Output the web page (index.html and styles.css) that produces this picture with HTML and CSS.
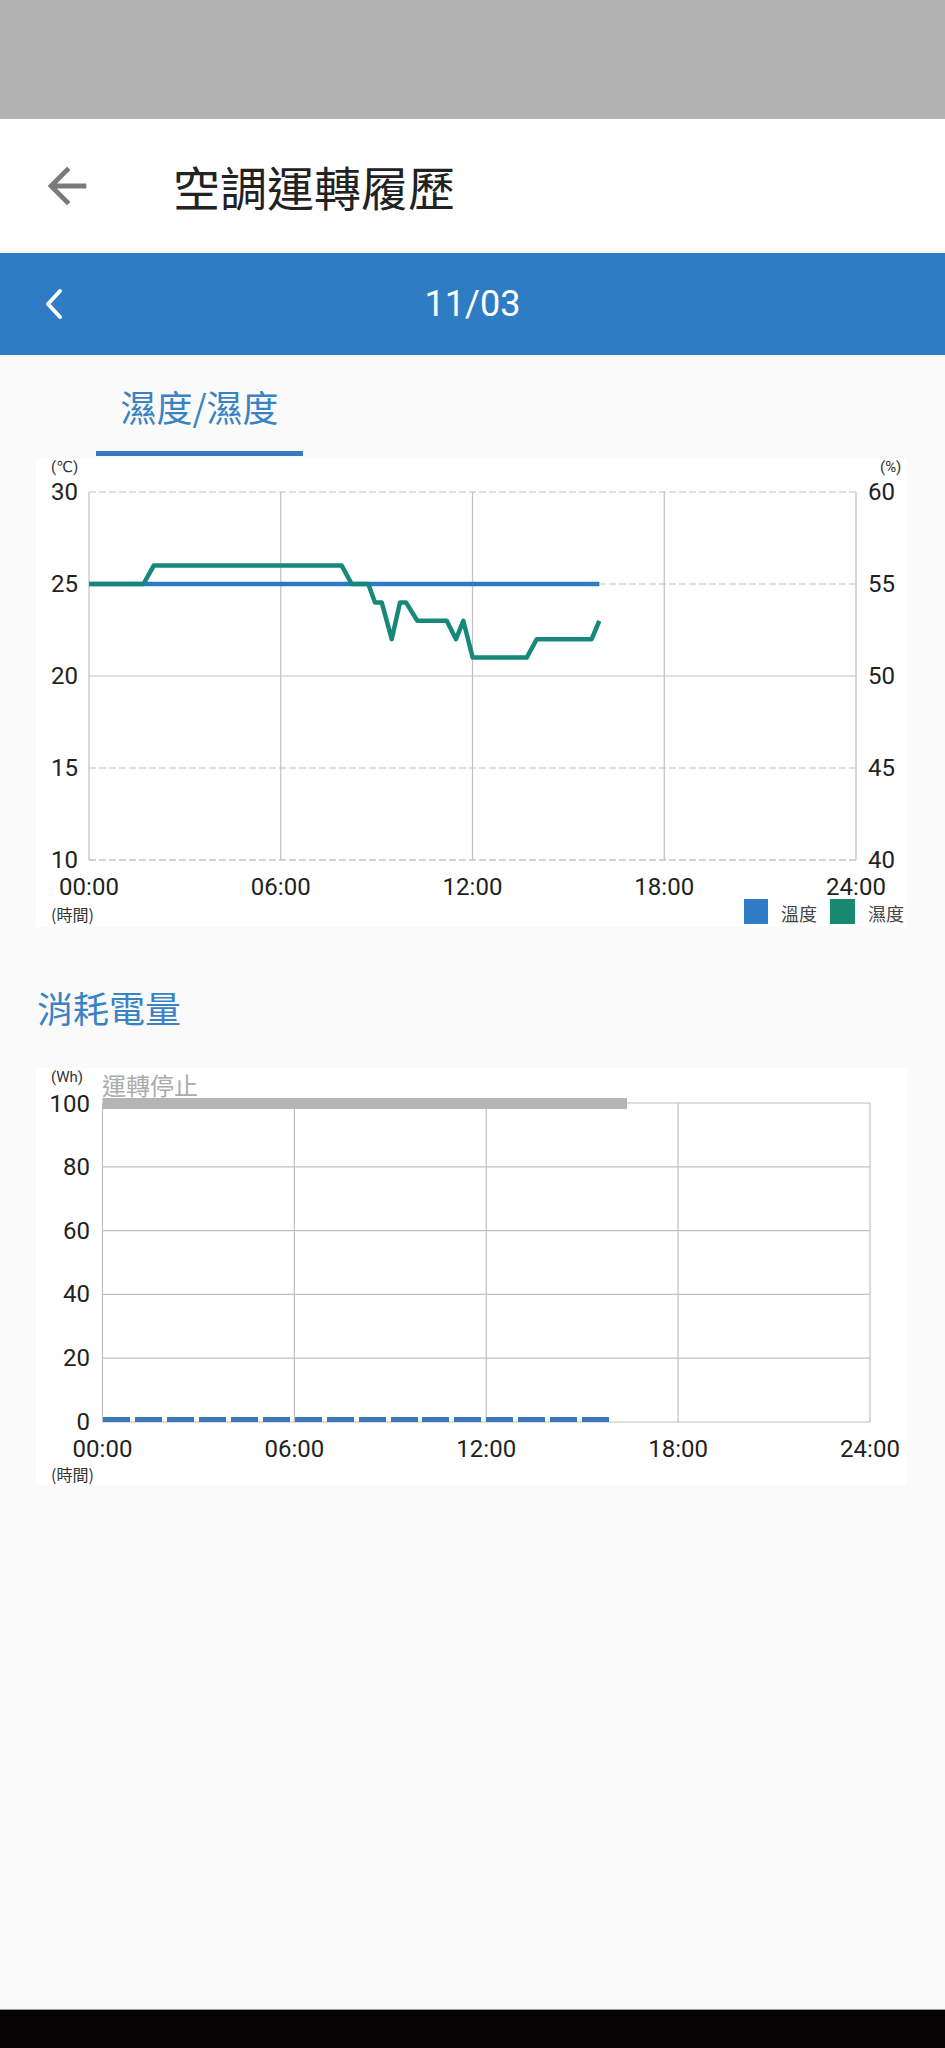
FILE: index.html
```html
<!DOCTYPE html>
<html lang="zh-Hant">

<head>
    <meta charset="UTF-8">
    <meta name="viewport" content="width=device-width, initial-scale=1.0">
    <link rel="stylesheet" href="styles.css">
    <title>空調運轉履歷</title>
</head>

<body>
    <div class="status-bar"></div>

    <header class="app-bar">
        <button class="back-button" aria-label="back">
            <svg viewBox="0 0 24 24" width="58" height="58">
                <path d="M20 11H7.83l5.59-5.59L12 4l-8 8 8 8 1.41-1.41L7.83 13H20v-2z" />
            </svg>
        </button>
        <h1>空調運轉履歷</h1>
    </header>

    <nav class="date-bar">
        <button class="prev-day" aria-label="previous day">
            <svg viewBox="0 0 24 32" width="24" height="32">
                <polyline points="18,3 6,16 18,29" />
            </svg>
        </button>
        <span class="date">11/03</span>
        <span></span>
    </nav>

    <main>
        <div class="tabs">
            <div class="tab active">濕度/濕度</div>
        </div>

        <!-- temperature / humidity -->
        <section class="chart-card chart-climate">
            <svg width="871" height="469" viewBox="0 0 871 469">
                <g class="grid">
                    <line class="dashed" x1="53" y1="34" x2="820" y2="34" />
                    <line class="dashed" x1="53" y1="126" x2="820" y2="126" />
                    <line x1="53" y1="218" x2="820" y2="218" />
                    <line class="dashed" x1="53" y1="310" x2="820" y2="310" />
                    <line class="dashed dark" x1="53" y1="402" x2="820" y2="402" />
                    <line x1="53" y1="34" x2="53" y2="402" />
                    <line x1="244.75" y1="34" x2="244.75" y2="402" />
                    <line x1="436.5" y1="34" x2="436.5" y2="402" />
                    <line x1="628.25" y1="34" x2="628.25" y2="402" />
                    <line x1="820" y1="34" x2="820" y2="402" />
                </g>

                <polyline class="series temp" points="53,126 563.3,126" />
                <polyline class="series humid" points="53,126 107.5,126 117.7,107.6 305.7,107.6 315.7,126 332.3,126 339,144.4 345.7,144.4 355.7,181.2 364,144.4 370,144.4 381.3,162.8 410.7,162.8 420,181.2 427.3,162.8 436.7,199.6 490.7,199.6 500.7,181.2 555.7,181.2 563.3,162.8" />

                <text class="unit" x="15" y="9">(℃)</text>
                <text class="unit" x="844" y="9">(%)</text>

                <g class="axis" text-anchor="end">
                    <text x="42" y="34">30</text>
                    <text x="42" y="126">25</text>
                    <text x="42" y="218">20</text>
                    <text x="42" y="310">15</text>
                    <text x="42" y="402">10</text>
                </g>
                <g class="axis">
                    <text x="832" y="34">60</text>
                    <text x="832" y="126">55</text>
                    <text x="832" y="218">50</text>
                    <text x="832" y="310">45</text>
                    <text x="832" y="402">40</text>
                </g>
                <g class="axis" text-anchor="middle">
                    <text x="53" y="429">00:00</text>
                    <text x="244.75" y="429">06:00</text>
                    <text x="436.5" y="429">12:00</text>
                    <text x="628.25" y="429">18:00</text>
                    <text x="820" y="429">24:00</text>
                </g>
                <text class="unit cjk" x="15" y="456">(時間)</text>

                <rect class="swatch temp" x="708" y="441" width="24" height="25" />
                <text class="legend" x="745" y="455">溫度</text>
                <rect class="swatch humid" x="794" y="441" width="25" height="25" />
                <text class="legend" x="832" y="455">濕度</text>
            </svg>
        </section>

        <h2 class="section-title">消耗電量</h2>

        <!-- power consumption -->
        <section class="chart-card chart-power">
            <svg width="871" height="417" viewBox="0 0 871 417">
                <g class="grid">
                    <line x1="66.5" y1="35" x2="834" y2="35" />
                    <line x1="66.5" y1="98.8" x2="834" y2="98.8" />
                    <line x1="66.5" y1="162.6" x2="834" y2="162.6" />
                    <line x1="66.5" y1="226.4" x2="834" y2="226.4" />
                    <line x1="66.5" y1="290.2" x2="834" y2="290.2" />
                    <line x1="66.5" y1="354" x2="834" y2="354" />
                    <line x1="66.5" y1="35" x2="66.5" y2="354" />
                    <line x1="258.4" y1="35" x2="258.4" y2="354" />
                    <line x1="450.25" y1="35" x2="450.25" y2="354" />
                    <line x1="642.1" y1="35" x2="642.1" y2="354" />
                    <line x1="834" y1="35" x2="834" y2="354" />
                </g>

                <rect class="stop-bar" x="66.5" y="30" width="524.5" height="11" />
                <text class="unit" x="15" y="9">(Wh)</text>
                <text class="stopped" x="66" y="16">運轉停止</text>

                <g class="bars">
                    <rect x="67" y="349" width="27" height="5" />
                    <rect x="99" y="349" width="27" height="5" />
                    <rect x="131" y="349" width="27" height="5" />
                    <rect x="163" y="349" width="27" height="5" />
                    <rect x="195" y="349" width="27" height="5" />
                    <rect x="227" y="349" width="27" height="5" />
                    <rect x="259" y="349" width="27" height="5" />
                    <rect x="291" y="349" width="27" height="5" />
                    <rect x="323" y="349" width="27" height="5" />
                    <rect x="355" y="349" width="27" height="5" />
                    <rect x="386" y="349" width="27" height="5" />
                    <rect x="418" y="349" width="27" height="5" />
                    <rect x="450" y="349" width="27" height="5" />
                    <rect x="482" y="349" width="27" height="5" />
                    <rect x="514" y="349" width="27" height="5" />
                    <rect x="546" y="349" width="27" height="5" />
                </g>

                <g class="axis" text-anchor="end">
                    <text x="54" y="36">100</text>
                    <text x="54" y="98.8">80</text>
                    <text x="54" y="162.6">60</text>
                    <text x="54" y="226.4">40</text>
                    <text x="54" y="290.2">20</text>
                    <text x="54" y="354">0</text>
                </g>
                <g class="axis" text-anchor="middle">
                    <text x="66.5" y="381">00:00</text>
                    <text x="258.4" y="381">06:00</text>
                    <text x="450.25" y="381">12:00</text>
                    <text x="642.1" y="381">18:00</text>
                    <text x="834" y="381">24:00</text>
                </g>
                <text class="unit cjk" x="15" y="406">(時間)</text>
            </svg>
        </section>
    </main>

    <div class="nav-bar"></div>
</body>

</html>
```

FILE: styles.css
```css
* {
    box-sizing: border-box;
}

body {
    margin: 0;
    min-height: 2048px;
    display: flex;
    flex-direction: column;
    background-color: #fafafa;
    font-family: Roboto, "Noto Sans CJK TC", sans-serif;
    color: #212121;
}

.status-bar {
    height: 119px;
    background-color: #b3b3b3;
}

.app-bar {
    height: 129px;
    display: flex;
    align-items: center;
    padding: 4px 0 0 38px;
    background-color: #fff;
}

.back-button {
    width: 58px;
    height: 58px;
    padding: 0;
    border: 0;
    background: none;
    fill: #7a7a7a;
}

.back-button svg {
    display: block;
}

.app-bar h1 {
    margin: 0 0 0 77px;
    font-family: "Noto Sans CJK TC", sans-serif;
    font-size: 47px;
    font-weight: 400;
    line-height: 56px;
    color: #222;
}

.date-bar {
    height: 102px;
    margin-top: 5px;
    display: grid;
    grid-template-columns: 1fr auto 1fr;
    align-items: center;
    background-color: #2e7cc4;
    color: #fff;
}

.prev-day {
    justify-self: start;
    margin-left: 42px;
    padding: 0;
    border: 0;
    background: none;
}

.prev-day svg {
    display: block;
    fill: none;
    stroke: #fff;
    stroke-width: 4;
    stroke-linecap: round;
    stroke-linejoin: round;
}

.date {
    font-size: 36px;
    line-height: 1;
}

.tabs {
    display: flex;
    padding-left: 96px;
    margin-bottom: 2px;
}

.tab {
    width: 207px;
    padding: 27px 0 21px;
    border-bottom: 5px solid #3a7bbf;
    text-align: center;
    font-family: "Noto Sans CJK TC", sans-serif;
    font-size: 36px;
    line-height: 48px;
    color: #3a82c4;
}

.chart-card {
    margin: 0 38px 0 36px;
    background-color: #fff;
}

.chart-card svg {
    display: block;
    overflow: visible;
}

.chart-climate {
    height: 469px;
}

.chart-power {
    height: 417px;
}

.section-title {
    margin: 0;
    padding: 56px 0 37px 37px;
    font-family: "Noto Sans CJK TC", sans-serif;
    font-size: 36px;
    font-weight: 400;
    line-height: 48px;
    color: #3a82c4;
}

.grid line {
    stroke: #c0c0c0;
    stroke-width: 1.2;
}

.grid line.dashed {
    stroke-dasharray: 7 3;
}

.grid line.dark {
    stroke: #a8a8a8;
}

.series {
    fill: none;
    stroke-width: 4.5;
    stroke-linejoin: round;
}

.series.temp {
    stroke: #2f79c3;
}

.series.humid {
    stroke: #17897a;
}

.swatch.temp {
    fill: #2f7bc6;
}

.swatch.humid {
    fill: #18896f;
}

.axis text {
    font-size: 24px;
    fill: #222;
    dominant-baseline: central;
}

.unit {
    font-family: Roboto, "DejaVu Sans", sans-serif;
    font-size: 15px;
    fill: #333;
    dominant-baseline: central;
}

.unit.cjk {
    font-family: "Noto Sans CJK TC", sans-serif;
    font-size: 16px;
}

.legend {
    font-family: "Noto Sans CJK TC", sans-serif;
    font-size: 18px;
    fill: #444;
    dominant-baseline: central;
}

.stopped {
    font-family: "Noto Sans CJK TC", sans-serif;
    font-size: 24px;
    fill: #ababab;
    dominant-baseline: central;
}

.stop-bar {
    fill: #b5b5b5;
}

.bars rect {
    fill: #3a78b8;
}

.nav-bar {
    height: 39px;
    margin-top: auto;
    border-top: 1px solid #9a9a9a;
    background-color: #060304;
}
```
